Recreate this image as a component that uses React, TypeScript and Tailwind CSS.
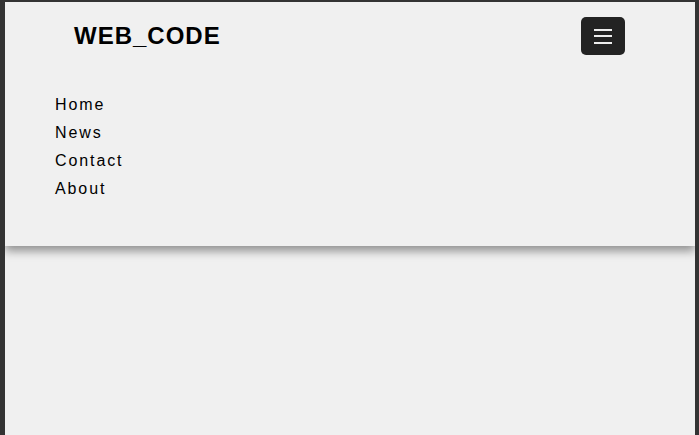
import React from "react";

export default function App() {
  return (
    <div className="w-[699px] h-[435px] bg-[#333333] pt-[2px] pl-[5px] pr-[4px] overflow-hidden" style={{ fontFamily: '"Liberation Sans", Arial, sans-serif' }}>
      <div className="h-[433px] bg-[#f0f0f0] overflow-hidden">
        <header className="bg-[#f0f0f0] shadow-[0_5px_9px_rgba(0,0,0,0.4)] pb-[43px]">
          <div className="flex items-center justify-between pl-[69px] pr-[70px] py-[15px] h-[68px]">
            <span className="text-[24px] font-bold tracking-[1px] text-black leading-none">WEB_CODE</span>
            <button className="w-[44px] h-[38px] rounded-[5px] bg-[#232323] flex flex-col items-center justify-center gap-[4.5px]">
              <span className="block w-[18px] h-[2px] bg-[#eeeeee]" />
              <span className="block w-[18px] h-[2px] bg-[#eeeeee]" />
              <span className="block w-[18px] h-[2px] bg-[#eeeeee]" />
            </button>
          </div>
          <ul className="mt-[21px] pl-[50px] flex flex-col">
            {["Home", "News", "Contact", "About"].map((t) => (
              <li key={t} className="text-[16px] leading-[28px] tracking-[1.9px] text-black">
                {t}
              </li>
            ))}
          </ul>
        </header>
      </div>
    </div>
  );
}
